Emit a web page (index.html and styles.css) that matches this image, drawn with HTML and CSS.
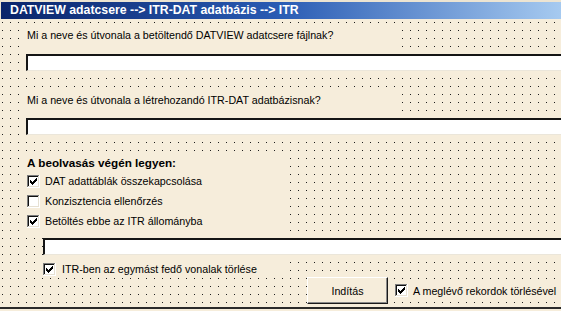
FILE: index.html
```html
<!DOCTYPE html>
<html lang="hu">
<head>
<meta charset="utf-8">
<title>DATVIEW adatcsere</title>
<link rel="stylesheet" href="styles.css">
</head>
<body>
<div class="window">
  <div class="titlebar">DATVIEW adatcsere --&gt; ITR-DAT adatbázis --&gt; ITR</div>
  <div class="detail">
    <div class="label q1">Mi a neve és útvonala a betöltendő DATVIEW adatcsere fájlnak?</div>
    <div class="textbox tb1"></div>
    <div class="label q2">Mi a neve és útvonala a létrehozandó ITR-DAT adatbázisnak?</div>
    <div class="textbox tb2"></div>
    <div class="section">
      <div class="heading">A beolvasás végén legyen:</div>
      <div class="check-row">
        <svg class="cb" width="13" height="13" viewBox="0 0 13 13"><use href="#box"/><use href="#tick"/></svg>
        <span>DAT adattáblák összekapcsolása</span>
      </div>
      <div class="check-row">
        <svg class="cb" width="13" height="13" viewBox="0 0 13 13"><use href="#box"/></svg>
        <span>Konzisztencia ellenőrzés</span>
      </div>
      <div class="check-row">
        <svg class="cb" width="13" height="13" viewBox="0 0 13 13"><use href="#box"/><use href="#tick"/></svg>
        <span>Betöltés ebbe az ITR állományba</span>
      </div>
    </div>
    <div class="textbox tb3"></div>
    <div class="check-row itr">
      <svg class="cb" width="13" height="13" viewBox="0 0 13 13"><use href="#box"/><use href="#tick"/></svg>
      <span>ITR-ben az egymást fedő vonalak törlése</span>
    </div>
    <div class="actions">
      <div class="button">Indítás</div>
      <div class="check-row keep">
        <svg class="cb" width="13" height="13" viewBox="0 0 13 13"><use href="#box"/><use href="#tick"/></svg>
        <span>A meglévő rekordok törlésével</span>
      </div>
    </div>
  </div>
</div>
<svg class="defs" width="0" height="0">
  <defs>
    <g id="box" shape-rendering="crispEdges">
      <rect x="0" y="0" width="13" height="13" fill="#ffffff"/>
      <rect x="0" y="0" width="12" height="12" fill="#7c7c7c"/>
      <rect x="1" y="1" width="11" height="11" fill="#e6e0d2"/>
      <rect x="1" y="1" width="10" height="10" fill="#111111"/>
      <rect x="2" y="2" width="9" height="9" fill="#ffffff"/>
    </g>
    <g id="tick" fill="#000" shape-rendering="crispEdges">
      <rect x="3" y="5" width="1" height="3"/>
      <rect x="4" y="6" width="1" height="3"/>
      <rect x="5" y="7" width="1" height="3"/>
      <rect x="6" y="6" width="1" height="3"/>
      <rect x="7" y="5" width="1" height="3"/>
      <rect x="8" y="4" width="1" height="3"/>
      <rect x="9" y="3" width="1" height="3"/>
    </g>
  </defs>
</svg>
</body>
</html>
```
FILE: styles.css
```css
html, body {
  margin: 0;
  padding: 0;
  width: 561px;
  height: 311px;
  overflow: hidden;
  background: #f6eddb;
}
body {
  font-family: "Liberation Sans", Arial, sans-serif;
  font-size: 10.7px;
  color: #000;
}
.defs {
  position: absolute;
  width: 0;
  height: 0;
}
.window {
  width: 561px;
  height: 311px;
  overflow: hidden;
  display: flex;
  flex-direction: column;
}
.titlebar {
  height: 17px;
  border-top: 2px solid #ece4d2;
  border-left: 1px solid #ece4d2;
  background: linear-gradient(to right, #0a246a 0%, #2a5cb4 50%, #a6caf0 100%);
  color: #fff;
  font-weight: bold;
  font-size: 12.3px;
  line-height: 17px;
  padding-left: 9px;
  white-space: nowrap;
}
.detail {
  height: 288px;
  border-bottom: 2px solid #2a2a2a;
  padding-left: 25px;
  overflow: hidden;
  background-color: #f6eddb;
  background-image:
    linear-gradient(to right, rgba(0,0,0,0) 1px, #f6eddb 1px),
    linear-gradient(to bottom, #1e1e1e 1px, #f6eddb 1px);
  background-size: 8px 8px, 8px 8px;
  background-position: 2px 3px, 2px 3px;
}
.label {
  background: #f6eddb;
  width: 375px;
  height: 23px;
  line-height: 23px;
  padding-left: 2px;
  box-sizing: border-box;
  white-space: nowrap;
}
.q1 { margin-top: 5px; }
.q2 { margin-top: 17px; height: 24px; line-height: 24px; }
.textbox {
  height: 17px;
  box-sizing: border-box;
  background: #fff;
  border-top: 2px solid #151515;
  border-left: 2px solid #151515;
  border-bottom: 1px solid #ebe6da;
  margin-right: -20px;
}
.tb1 { margin-top: 7px; margin-left: 1px; }
.tb2 { margin-top: 6px; margin-left: 1px; }
.section {
  margin-top: 17px;
  width: 258px;
  background: #f6eddb;
}
.heading {
  font-weight: bold;
  font-size: 11.7px;
  height: 19px;
  padding-top: 3px;
  line-height: 16px;
  padding-left: 2px;
  box-sizing: border-box;
}
.check-row {
  display: flex;
  align-items: center;
  height: 20px;
  padding-left: 2px;
  background: #f6eddb;
  white-space: nowrap;
}
.check-row .cb {
  flex: none;
  margin-right: 5px;
}
.tb3 { margin-top: 7px; margin-left: 18px; }
.itr {
  margin-top: 6px;
  margin-left: 15px;
  width: 240px;
  height: 16px;
  padding-left: 3px;
}
.itr .cb { margin-right: 6px; }
.actions {
  display: flex;
  align-items: center;
  margin-left: 282px;
  height: 27px;
}
.button {
  width: 81px;
  height: 27px;
  box-sizing: border-box;
  background: #f6eddb;
  border-top: 1px solid #ffffff;
  border-left: 1px solid #ffffff;
  border-right: 1px solid #1a1a1a;
  border-bottom: 1px solid #1a1a1a;
  box-shadow: inset -1px -1px 0 #8a8a8a;
  display: flex;
  align-items: center;
  justify-content: center;
  flex: none;
}
.keep {
  margin-left: 4px;
  height: 22px;
  padding-left: 3px;
  flex: 1;
}
.keep .cb { margin-right: 5px; }
```
